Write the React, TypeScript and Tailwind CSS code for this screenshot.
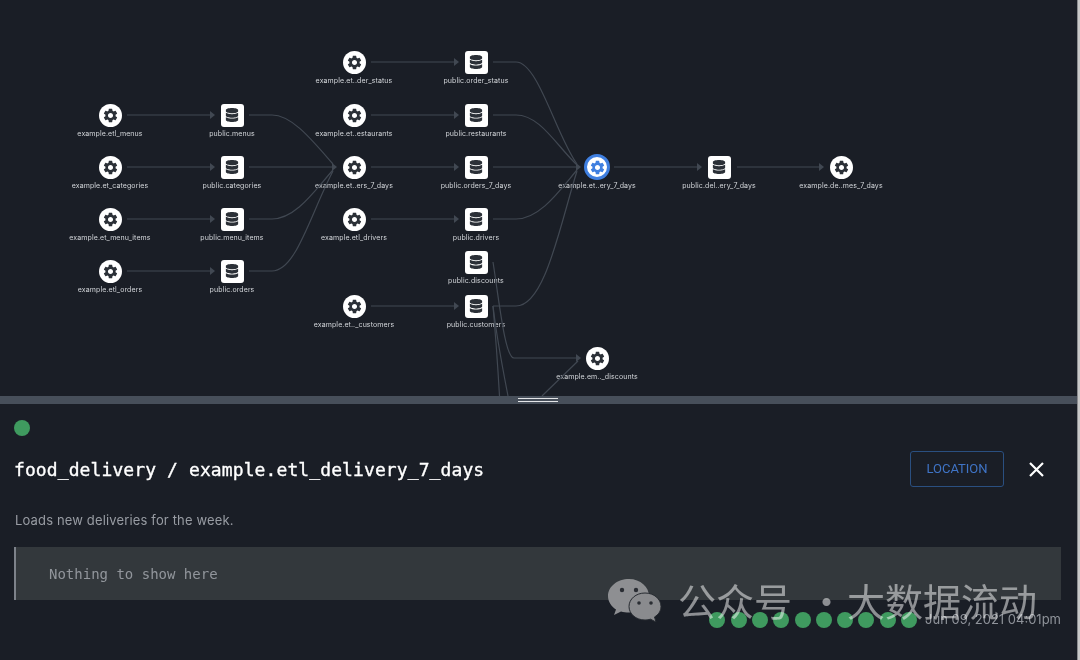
import { MdSettings } from 'react-icons/md';
import { FaDatabase } from 'react-icons/fa';

type GraphNode = { kind: 'gear' | 'db'; x: number; y: number; label: string; active?: boolean };

const nodes: GraphNode[] = [
  { kind: 'gear', x: 110, y: 115, label: 'example.etl_menus' },
  { kind: 'db', x: 232, y: 115, label: 'public.menus' },
  { kind: 'gear', x: 110, y: 167, label: 'example.et_categories' },
  { kind: 'db', x: 232, y: 167, label: 'public.categories' },
  { kind: 'gear', x: 110, y: 219, label: 'example.et_menu_items' },
  { kind: 'db', x: 232, y: 219, label: 'public.menu_items' },
  { kind: 'gear', x: 110, y: 271, label: 'example.etl_orders' },
  { kind: 'db', x: 232, y: 271, label: 'public.orders' },
  { kind: 'gear', x: 354, y: 62, label: 'example.et..der_status' },
  { kind: 'db', x: 476, y: 62, label: 'public.order_status' },
  { kind: 'gear', x: 354, y: 115, label: 'example.et..estaurants' },
  { kind: 'db', x: 476, y: 115, label: 'public.restaurants' },
  { kind: 'gear', x: 354, y: 167, label: 'example.et..ers_7_days' },
  { kind: 'db', x: 476, y: 167, label: 'public.orders_7_days' },
  { kind: 'gear', x: 354, y: 219, label: 'example.etl_drivers' },
  { kind: 'db', x: 476, y: 219, label: 'public.drivers' },
  { kind: 'db', x: 476, y: 262, label: 'public.discounts' },
  { kind: 'gear', x: 354, y: 306, label: 'example.et.._customers' },
  { kind: 'db', x: 476, y: 306, label: 'public.customers' },
  { kind: 'gear', x: 597, y: 167, label: 'example.et..ery_7_days', active: true },
  { kind: 'db', x: 719, y: 167, label: 'public.del..ery_7_days' },
  { kind: 'gear', x: 841, y: 167, label: 'example.de..mes_7_days' },
  { kind: 'gear', x: 597, y: 358, label: 'example.em.._discounts' },
];

const edges = [
  'M127 115H211',
  'M371 62H455',
  'M371 115H455',
  'M371 167H455',
  'M371 219H455',
  'M371 306H455',
  'M127 167H211',
  'M127 219H211',
  'M127 271H211',
  'M249 115H272C292 115 312 140 333 164',
  'M249 167H333',
  'M249 219H272C296 219 315 190 333 170',
  'M249 271H272C296 271 310 215 333 171',
  'M493 62H516C538 62 556 135 577 164',
  'M493 115H516C540 115 556 145 577 165',
  'M493 167H577',
  'M493 219H516C540 219 560 190 577 170',
  'M493 306H516C545 306 560 225 577 171',
  'M493 262C499 300 505 358 514 358H576',
  'M493 306C496 340 498 370 499.500 396',
  'M493 306C497 340 503 370 508 396',
  'M542 396L578 361',
  'M614 167H698',
  'M737 167H820',
];

const arrows = [
  [215, 115], [215, 167], [215, 219], [215, 271],
  [337, 167], [459, 62], [459, 115], [459, 167], [459, 219], [459, 306],
  [581, 167], [581, 358], [702, 167], [824, 167],
];

const dots = [0, 1, 2, 3, 4, 5, 6, 7, 8, 9];

function Node({ node }: { node: GraphNode }) {
  const box = node.kind === 'gear' ? 'rounded-full' : 'rounded-[3px]';
  return (
    <div
      className="absolute flex w-[130px] -translate-x-1/2 flex-col items-center"
      style={{ left: node.x, top: node.y - 11.5 }}
    >
      {node.active ? (
        <div className="flex h-[26px] w-[26px] -my-[1.5px] items-center justify-center rounded-full border-[3px] border-[#3f7fe0] bg-white text-[#3f7fe0]">
          <MdSettings size={17} />
        </div>
      ) : (
        <div className={`flex h-[23px] w-[23px] items-center justify-center bg-white text-[#2b3037] ${box}`}>
          {node.kind === 'gear' ? <MdSettings size={17} /> : <FaDatabase size={14} />}
        </div>
      )}
      <span className="mt-[1px] whitespace-nowrap text-[7px] leading-[12px] tracking-[0.1px] text-[#d3d6da] antialiased">
        {node.label}
      </span>
    </div>
  );
}

function WeChatMark() {
  return (
    <svg width="54" height="44" viewBox="0 0 54 44">
      <path d="M21 1C9.500 1 0 8.500 0 18c0 5.500 3 10 8 13.500L6 37l7-3.500c2.500.7 5 1 8 1 11.500 0 20-7.500 20-16.500S32.500 1 21 1z" fill="#8e8f92" />
      <path d="M37 15c-9 0-16 6-16 13.500S28 42 37 42c2 0 4-.3 5.500-.8L48 44l-1.500-5c4-2.500 6.500-6 6.500-10.500C53 21 46 15 37 15z" fill="#8a8b8e" stroke="#262a30" strokeWidth="1" />
      <circle cx="14" cy="12" r="2.200" fill="#2a2d33" />
      <circle cx="28" cy="12" r="2.200" fill="#2a2d33" />
      <circle cx="31" cy="25" r="1.800" fill="#2a2d33" />
      <circle cx="43" cy="25" r="1.800" fill="#2a2d33" />
    </svg>
  );
}

export default function App() {
  return (
    <div className="relative flex h-[660px] w-[1080px] overflow-hidden bg-[#1a1e26] font-['Inter',sans-serif]">
      <div className="flex min-w-0 flex-1 flex-col [will-change:transform]">
        {/* Graph */}
        <div className="relative h-[396px] shrink-0">
          {nodes.map((node) => (
            <Node key={node.label} node={node} />
          ))}
          <svg className="pointer-events-none absolute inset-0" width="1077" height="396" fill="none">
            {edges.map((d) => (
              <path key={d} d={d} stroke="#414852" strokeWidth="1.200" />
            ))}
            {arrows.map(([x, y]) => (
              <path key={`${x}-${y}`} d={`M${x - 5} ${y - 4}L${x} ${y}L${x - 5} ${y + 4}Z`} fill="#414852" />
            ))}
          </svg>
        </div>

        {/* Drag handle */}
        <div className="flex h-2 shrink-0 flex-col items-center justify-center gap-[2px] bg-[#474f5a]">
          <div className="mr-[2px] h-px w-10 bg-[#e4e6e8]" />
          <div className="mr-[2px] h-px w-10 bg-[#e4e6e8]" />
        </div>

        {/* Detail panel */}
        <div className="flex min-h-0 flex-1 flex-col pl-[14px] pr-[16px]">
          <div className="mt-4 h-4 w-4 rounded-full bg-[#3f9a5f]" />
          <div className="mt-[15px] flex h-9 items-center justify-between pr-[6px]">
            <h1 className="font-['DejaVu_Sans_Mono',monospace] text-[18px] font-normal tracking-[0.1px] text-white [-webkit-text-stroke:0.35px_white]">
              food_delivery / example.etl_delivery_7_days
            </h1>
            <div className="flex items-center gap-5">
              <button className="flex h-9 w-[94px] items-center justify-center rounded-[3px] border border-[#2a4f80] font-['Roboto',sans-serif] text-[13px] text-[#3f74c6]">
                LOCATION
              </button>
              <svg width="24" height="24" viewBox="0 0 24 24" fill="none" stroke="#ffffff" strokeWidth="2.200" className="mr-[7px]">
                <path d="M6 6L19 19M19 6L6 19" />
              </svg>
            </div>
          </div>
          <p className="mt-[23px] pl-px text-[13px] leading-5 tracking-[0.15px] text-[#989ca3]">Loads new deliveries for the week.</p>
          <div className="mt-[17px] flex h-[53px] w-[1047px] items-center border-l-2 border-[#7d828a] bg-[#33383c] pl-[33px]">
            <span className="mt-[2px] font-['DejaVu_Sans_Mono',monospace] text-[14px] text-[#92969c]">Nothing to show here</span>
          </div>
          <div className="mt-[10px] flex items-center justify-end">
            <div className="flex gap-[5.300px]">
              {dots.map((d) => (
                <div key={d} className="h-4 w-4 rounded-full bg-[#3f9a5f]" />
              ))}
            </div>
            <span className="ml-2 text-[13px] text-[#8f939a]">Jun 09, 2021 04:01pm</span>
          </div>
        </div>
      </div>

      {/* Window edge */}
      <div className="w-[3px] shrink-0 border-l border-[#8a8c8f] bg-[#c9c9c9]" />

      {/* Watermark */}
      <div className="pointer-events-none absolute left-[608px] top-[576px] flex items-center gap-4">
        <WeChatMark />
        <span className="whitespace-nowrap font-['Noto_Sans_CJK_SC',sans-serif] text-[38px] leading-[48px] text-white/50">
          公众号 <span className="relative left-[7px]">·</span> 大数据流动
        </span>
      </div>
    </div>
  );
}
